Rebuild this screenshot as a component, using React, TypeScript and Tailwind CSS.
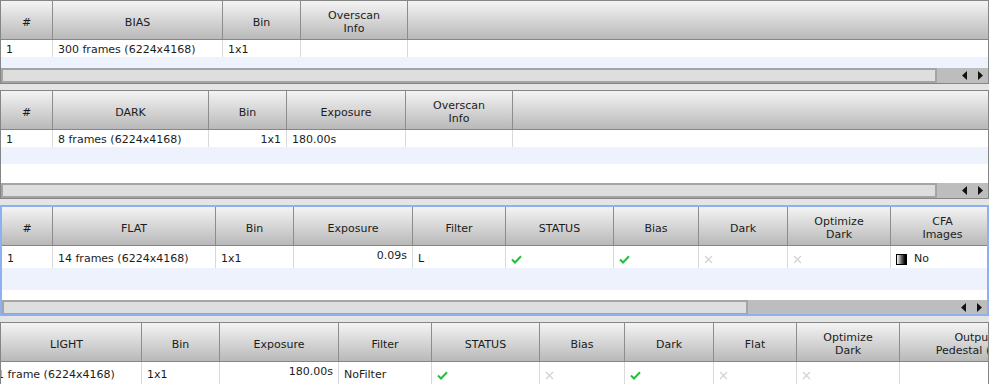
import React from "react";

type HCol = { w: string; lines: string[] };
type DCell = { w: string; content?: React.ReactNode; right?: boolean; up?: boolean };

function Check() {
  return (
    <svg width="11" height="9" viewBox="0 0 11 9">
      <path d="M1 4.5 L4 7.5 L10 1.2" fill="none" stroke="#1ec23a" strokeWidth="2" />
    </svg>
  );
}

function Cross() {
  return (
    <svg width="9" height="9" viewBox="0 0 9 9">
      <path d="M1 1 L8 8 M8 1 L1 8" stroke="#d3d3d3" strokeWidth="1.3" />
    </svg>
  );
}

function CfaIcon() {
  return (
    <span className="inline-block w-[11px] h-[11px] border border-black bg-linear-to-r from-white to-black mr-[7px]" />
  );
}

function HeaderRow({ cols, extra = true }: { cols: HCol[]; extra?: boolean }) {
  return (
    <div className="flex h-[39px] shrink-0 border-b border-[#868686] bg-linear-to-b from-[#f4f4f4] to-[#b9b9b9]">
      {cols.map((c, i) => (
        <div
          key={i}
          className={`${c.w} shrink-0 h-full border-r border-[#8c8c8c] flex flex-col items-center justify-center pt-[4px] text-center leading-[13px] whitespace-nowrap overflow-hidden`}
        >
          {c.lines.map((l, j) => (
            <span key={j}>{l}</span>
          ))}
        </div>
      ))}
      {extra && <div className="flex-1" />}
    </div>
  );
}

function DataRow({ cells, h }: { cells: DCell[]; h: string }) {
  return (
    <div className={`flex ${h} shrink-0 bg-white`}>
      {cells.map((c, i) => (
        <div
          key={i}
          className={`${c.w} shrink-0 h-full border-r border-[#d9d9d9] flex items-center px-[5px] whitespace-nowrap overflow-hidden ${
            c.right ? "justify-end" : ""
          } ${c.up ? "pb-[2px]" : "pt-[4px]"}`}
        >
          {c.content}
        </div>
      ))}
      <div className="flex-1" />
    </div>
  );
}

function Scrollbar({ thumb }: { thumb: string }) {
  return (
    <div className="flex h-[15px] shrink-0 bg-[#bdbdbd]">
      <div className={`${thumb} shrink-0 h-full border-2 border-[#a4a4a4] bg-[#dedede]`} />
      <div className="flex-1 flex items-center justify-end gap-[11px] pr-[5px]">
        <svg width="5" height="9" viewBox="0 0 5 9">
          <polygon points="5,0 5,9 0,4.5" fill="#111" />
        </svg>
        <svg width="5" height="9" viewBox="0 0 5 9">
          <polygon points="0,0 0,9 5,4.5" fill="#111" />
        </svg>
      </div>
    </div>
  );
}

export default function App() {
  const biasCols: HCol[] = [
    { w: "w-[52px]", lines: ["#"] },
    { w: "w-[170px]", lines: ["BIAS"] },
    { w: "w-[78px]", lines: ["Bin"] },
    { w: "w-[107px]", lines: ["Overscan", "Info"] },
  ];
  const darkCols: HCol[] = [
    { w: "w-[52px]", lines: ["#"] },
    { w: "w-[156px]", lines: ["DARK"] },
    { w: "w-[78px]", lines: ["Bin"] },
    { w: "w-[119px]", lines: ["Exposure"] },
    { w: "w-[107px]", lines: ["Overscan", "Info"] },
  ];
  const flatCols: HCol[] = [
    { w: "w-[51px]", lines: ["#"] },
    { w: "w-[163px]", lines: ["FLAT"] },
    { w: "w-[78px]", lines: ["Bin"] },
    { w: "w-[119px]", lines: ["Exposure"] },
    { w: "w-[93px]", lines: ["Filter"] },
    { w: "w-[108px]", lines: ["STATUS"] },
    { w: "w-[85px]", lines: ["Bias"] },
    { w: "w-[89px]", lines: ["Dark"] },
    { w: "w-[103px]", lines: ["Optimize", "Dark"] },
    { w: "w-[104px]", lines: ["CFA", "Images"] },
  ];
  const lightCols: HCol[] = [
    { w: "w-[52px]", lines: ["#"] },
    { w: "w-[150px]", lines: ["LIGHT"] },
    { w: "w-[78px]", lines: ["Bin"] },
    { w: "w-[119px]", lines: ["Exposure"] },
    { w: "w-[93px]", lines: ["Filter"] },
    { w: "w-[108px]", lines: ["STATUS"] },
    { w: "w-[85px]", lines: ["Bias"] },
    { w: "w-[89px]", lines: ["Dark"] },
    { w: "w-[83px]", lines: ["Flat"] },
    { w: "w-[103px]", lines: ["Optimize", "Dark"] },
    { w: "w-[148px]", lines: ["Output", "Pedestal (DN)"] },
  ];

  return (
    <div className="w-[989px] h-[384px] overflow-hidden bg-[#e4e4e4] font-['DejaVu_Sans','Verdana',sans-serif] text-[11px] text-[#1c1c1c] flex flex-col">
      {/* BIAS */}
      <div className="flex flex-col h-[84px] shrink-0 border border-[#858585] overflow-hidden">
        <HeaderRow cols={biasCols} />
        <DataRow
          h="h-[17px]"
          cells={[
            { w: "w-[52px]", content: "1" },
            { w: "w-[170px]", content: "300 frames (6224x4168)" },
            { w: "w-[78px]", content: "1x1" },
            { w: "w-[107px]" },
          ]}
        />
        <div className="h-[11px] shrink-0 bg-[#eef2fd]" />
        <Scrollbar thumb="w-[936px]" />
      </div>

      {/* DARK */}
      <div className="mt-[6px] flex flex-col h-[109px] shrink-0 border border-[#858585] overflow-hidden">
        <HeaderRow cols={darkCols} />
        <DataRow
          h="h-[17px]"
          cells={[
            { w: "w-[52px]", content: "1" },
            { w: "w-[156px]", content: "8 frames (6224x4168)" },
            { w: "w-[78px]", content: "1x1", right: true },
            { w: "w-[119px]", content: "180.00s" },
            { w: "w-[107px]" },
          ]}
        />
        <div className="h-[17px] shrink-0 bg-[#eef2fd]" />
        <div className="h-[19px] shrink-0 bg-white" />
        <Scrollbar thumb="w-[936px]" />
      </div>

      {/* FLAT */}
      <div className="mt-[6px] flex flex-col h-[111px] shrink-0 border-2 border-[#8db0ee] overflow-hidden">
        <HeaderRow cols={flatCols} extra={false} />
        <DataRow
          h="h-[22px]"
          cells={[
            { w: "w-[51px]", content: "1" },
            { w: "w-[163px]", content: "14 frames (6224x4168)" },
            { w: "w-[78px]", content: "1x1" },
            { w: "w-[119px]", content: "0.09s", right: true, up: true },
            { w: "w-[93px]", content: "L" },
            { w: "w-[108px]", content: <Check /> },
            { w: "w-[85px]", content: <Check /> },
            { w: "w-[89px]", content: <Cross /> },
            { w: "w-[103px]", content: <Cross /> },
            {
              w: "w-[104px]",
              content: (
                <span className="flex items-center">
                  <CfaIcon />
                  No
                </span>
              ),
            },
          ]}
        />
        <div className="h-[22px] shrink-0 bg-[#eef2fd]" />
        <div className="h-[10px] shrink-0 bg-white" />
        <Scrollbar thumb="w-[746px]" />
      </div>

      {/* LIGHT */}
      <div className="mt-[6px] flex flex-col flex-1 border border-[#858585] border-b-0 overflow-hidden">
        <div className="-ml-[61px] flex flex-col w-max">
          <HeaderRow cols={lightCols} extra={false} />
          <DataRow
            h="h-[22px]"
            cells={[
              { w: "w-[52px]", content: "1" },
              { w: "w-[150px]", content: "1 frame (6224x4168)" },
              { w: "w-[78px]", content: "1x1" },
              { w: "w-[119px]", content: "180.00s", right: true, up: true },
              { w: "w-[93px]", content: "NoFilter" },
              { w: "w-[108px]", content: <Check /> },
              { w: "w-[85px]", content: <Cross /> },
              { w: "w-[89px]", content: <Check /> },
              { w: "w-[83px]", content: <Cross /> },
              { w: "w-[103px]", content: <Cross /> },
              { w: "w-[148px]" },
            ]}
          />
        </div>
      </div>
    </div>
  );
}
